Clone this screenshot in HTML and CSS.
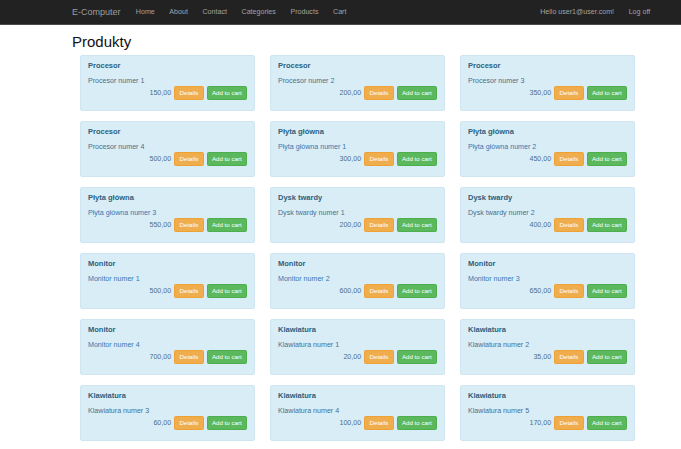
FILE: index.html
```html
<!DOCTYPE html>
<html>
<head>
<meta charset="utf-8">
<title>Produkty</title>
<link rel="stylesheet" href="styles.css">
</head>
<body>
<nav class="navbar">
  <div class="nav-inner">
    <a class="brand">E-Computer</a>
    <ul class="nav">
      <li><a>Home</a></li>
      <li><a>About</a></li>
      <li><a>Contact</a></li>
      <li><a>Categories</a></li>
      <li><a>Products</a></li>
      <li><a>Cart</a></li>
    </ul>
    <ul class="nav nav-right">
      <li><a>Hello user1@user.com!</a></li>
      <li><a>Log off</a></li>
    </ul>
  </div>
</nav>
<main class="main">
  <h2 class="heading">Produkty</h2>
  <div class="grid">
    <div class="card"><div class="title">Procesor</div><div class="desc">Procesor numer 1</div><div class="actions"><span class="price">150,00</span><a class="btn btn-warn">Details</a><a class="btn btn-ok">Add to cart</a></div></div>
    <div class="card"><div class="title">Procesor</div><div class="desc">Procesor numer 2</div><div class="actions"><span class="price">200,00</span><a class="btn btn-warn">Details</a><a class="btn btn-ok">Add to cart</a></div></div>
    <div class="card"><div class="title">Procesor</div><div class="desc">Procesor numer 3</div><div class="actions"><span class="price">350,00</span><a class="btn btn-warn">Details</a><a class="btn btn-ok">Add to cart</a></div></div>

    <div class="card"><div class="title">Procesor</div><div class="desc">Procesor numer 4</div><div class="actions"><span class="price">500,00</span><a class="btn btn-warn">Details</a><a class="btn btn-ok">Add to cart</a></div></div>
    <div class="card"><div class="title">Płyta główna</div><div class="desc link">Płyta główna numer 1</div><div class="actions"><span class="price">300,00</span><a class="btn btn-warn">Details</a><a class="btn btn-ok">Add to cart</a></div></div>
    <div class="card"><div class="title">Płyta główna</div><div class="desc link">Płyta główna numer 2</div><div class="actions"><span class="price">450,00</span><a class="btn btn-warn">Details</a><a class="btn btn-ok">Add to cart</a></div></div>

    <div class="card"><div class="title">Płyta główna</div><div class="desc link">Płyta główna numer 3</div><div class="actions"><span class="price">550,00</span><a class="btn btn-warn">Details</a><a class="btn btn-ok">Add to cart</a></div></div>
    <div class="card"><div class="title">Dysk twardy</div><div class="desc">Dysk twardy numer 1</div><div class="actions"><span class="price">200,00</span><a class="btn btn-warn">Details</a><a class="btn btn-ok">Add to cart</a></div></div>
    <div class="card"><div class="title">Dysk twardy</div><div class="desc">Dysk twardy numer 2</div><div class="actions"><span class="price">400,00</span><a class="btn btn-warn">Details</a><a class="btn btn-ok">Add to cart</a></div></div>

    <div class="card"><div class="title">Monitor</div><div class="desc link">Monitor numer 1</div><div class="actions"><span class="price">500,00</span><a class="btn btn-warn">Details</a><a class="btn btn-ok">Add to cart</a></div></div>
    <div class="card"><div class="title">Monitor</div><div class="desc link">Monitor numer 2</div><div class="actions"><span class="price">600,00</span><a class="btn btn-warn">Details</a><a class="btn btn-ok">Add to cart</a></div></div>
    <div class="card"><div class="title">Monitor</div><div class="desc link">Monitor numer 3</div><div class="actions"><span class="price">650,00</span><a class="btn btn-warn">Details</a><a class="btn btn-ok">Add to cart</a></div></div>

    <div class="card"><div class="title">Monitor</div><div class="desc link">Monitor numer 4</div><div class="actions"><span class="price">700,00</span><a class="btn btn-warn">Details</a><a class="btn btn-ok">Add to cart</a></div></div>
    <div class="card"><div class="title">Klawiatura</div><div class="desc">Klawiatura numer 1</div><div class="actions"><span class="price">20,00</span><a class="btn btn-warn">Details</a><a class="btn btn-ok">Add to cart</a></div></div>
    <div class="card"><div class="title">Klawiatura</div><div class="desc">Klawiatura numer 2</div><div class="actions"><span class="price">35,00</span><a class="btn btn-warn">Details</a><a class="btn btn-ok">Add to cart</a></div></div>

    <div class="card"><div class="title">Klawiatura</div><div class="desc">Klawiatura numer 3</div><div class="actions"><span class="price">60,00</span><a class="btn btn-warn">Details</a><a class="btn btn-ok">Add to cart</a></div></div>
    <div class="card"><div class="title">Klawiatura</div><div class="desc">Klawiatura numer 4</div><div class="actions"><span class="price">100,00</span><a class="btn btn-warn">Details</a><a class="btn btn-ok">Add to cart</a></div></div>
    <div class="card"><div class="title">Klawiatura</div><div class="desc">Klawiatura numer 5</div><div class="actions"><span class="price">170,00</span><a class="btn btn-warn">Details</a><a class="btn btn-ok">Add to cart</a></div></div>
  </div>
</main>
</body>
</html>
```

FILE: styles.css
```css
* { box-sizing: border-box; }
html, body { margin: 0; padding: 0; background: #fff; }
body {
  font-family: "Liberation Sans", Arial, sans-serif;
  color: #333;
}
.navbar {
  background: #222222;
  border-bottom: 1px solid #4a4a4a;
  height: 25px;
}
.nav-inner {
  margin-left: 64.5px;
  width: 593px;
  height: 24px;
  display: flex;
  align-items: center;
}
.brand {
  font-size: 9px;
  color: #9d9d9d;
  padding: 0 8px 0 7.5px;
  line-height: 24px;
}
.nav {
  list-style: none;
  margin: 0;
  padding: 0;
  display: flex;
}
.nav a {
  display: block;
  font-size: 7.1px;
  color: #a3a3a3;
  padding: 0 7.3px;
  line-height: 24px;
}
.nav-right { margin-left: auto; }
.main {
  padding-left: 72px;
}
.heading {
  margin: 7.5px 0 4px 0;
  font-size: 15px;
  line-height: 18px;
  font-weight: 400;
  color: #111;
}
.grid {
  margin-left: 8px;
  display: grid;
  grid-template-columns: repeat(3, 175px);
  column-gap: 15px;
  row-gap: 10px;
}
.card {
  background: #d9edf7;
  border: 1px solid #cfe6f2;
  border-radius: 2px;
  padding: 5px 7px 10px 7px;
  height: 56px;
  color: #31708f;
}
.title {
  font-size: 7.5px;
  font-weight: 700;
  line-height: 10px;
  color: #2b5f7d;
}
.desc {
  margin-top: 5px;
  font-size: 7.1px;
  line-height: 10px;
  color: #4b6f8b;
}
.desc.link { color: #3478b0; }
.actions {
  display: flex;
  justify-content: flex-end;
  align-items: center;
  gap: 2.5px;
}
.price {
  font-size: 7.1px;
  color: #4b6f8b;
}
.btn {
  display: inline-block;
  font-size: 6.2px;
  line-height: 12px;
  height: 14px;
  color: #fff;
  padding: 0 4.3px;
  border: 1px solid;
  border-radius: 1.5px;
}
.btn-warn { background: #f0ad4e; border-color: #eea236; padding: 0 4.8px; }
.btn-ok { background: #5cb85c; border-color: #4cae4c; padding: 0 4.2px; }
```
